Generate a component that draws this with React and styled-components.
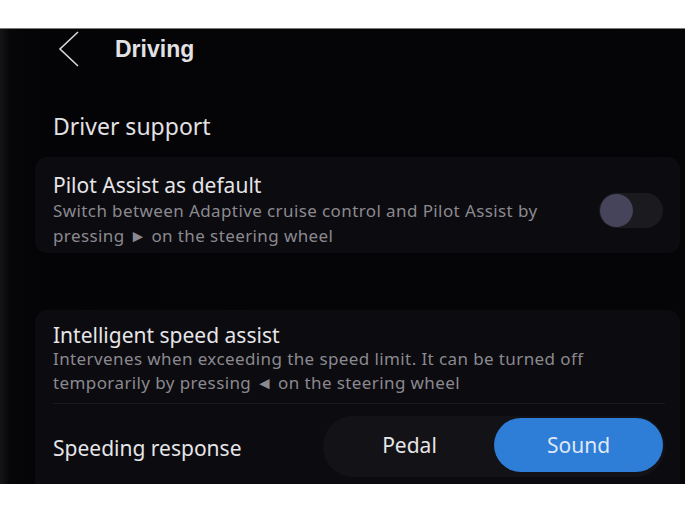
import styled, { createGlobalStyle } from "styled-components";

const GlobalStyle = createGlobalStyle`
    html, body {
        margin: 0;
        padding: 0;
        background: #ffffff;
    }
    body {
        font-family: "Noto Sans", "Open Sans", sans-serif;
    }
`;

const Page = styled.div`
    padding-top: 28px;
    height: 514px;
    box-sizing: border-box;
`;

const Screen = styled.div`
    height: 456px;
    overflow: hidden;
    background: linear-gradient(90deg, #151417 0px, #060507 10px, #040305 40px, #050406 100%);
    border-top: 1px solid #7a7a7a;
    box-sizing: border-box;
    color: #e4e3e6;
`;

const Header = styled.div`
    display: flex;
    align-items: center;
    height: 40px;
    padding-left: 58px;
    gap: 35px;
`;

const Title = styled.h1`
    margin: 0;
    font-family: "Liberation Sans", Arial, sans-serif;
    font-size: 23px;
    font-weight: 700;
    color: #e2e1e4;
`;

const SectionTitle = styled.h2`
    margin: 42px 0 0 53px;
    font-size: 23px;
    font-weight: 400;
    line-height: 30px;
    color: #e2e1e4;
`;

const Card = styled.div`
    margin: ${(p) => p.$top}px 5px 0 35px;
    background: #0c0b0f;
    border-radius: 12px;
    padding: ${(p) => p.$pad};
`;

const Row = styled.div`
    display: flex;
    align-items: center;
    justify-content: space-between;
`;

const TextBlock = styled.div`
    display: flex;
    flex-direction: column;
`;

const ItemTitle = styled.div`
    font-size: 21px;
    line-height: ${(p) => p.$lh || 26}px;
    color: #e6e5e8;
`;

const Desc = styled.div`
    font-size: 17px;
    line-height: ${(p) => p.$lh || 25}px;
    letter-spacing: 0.4px;
    color: #8b8990;
    max-width: 560px;
`;

const Toggle = styled.div`
    width: 66px;
    height: 35px;
    border-radius: 18px;
    background: #1b1a1f;
    display: flex;
    align-items: center;
    margin-right: 17px;
`;

const Knob = styled.div`
    width: 33px;
    height: 33px;
    border-radius: 50%;
    background: #46445a;
    margin-left: 1px;
`;

const Divider = styled.div`
    height: 1px;
    background: #19181c;
    margin: 8px 15px 0 0;
`;

const ResponseRow = styled(Row)`
    padding: 12px 15px 0 0;
`;

const Label = styled.div`
    font-size: 21px;
    color: #e6e5e8;
    padding-top: 3px;
`;

const Segmented = styled.div`
    display: grid;
    grid-template-columns: 1fr 1fr;
    width: 342px;
    height: 61px;
    padding: 2px 2px 5px 2px;
    box-sizing: border-box;
    border-radius: 30px;
    background: #131216;
`;

const Segment = styled.div`
    display: flex;
    align-items: center;
    justify-content: center;
    border-radius: 28px;
    font-size: 21px;
    color: ${(p) => (p.$active ? "#dfe8f5" : "#e6e5e8")};
    background: ${(p) => (p.$active ? "#2e7dd7" : "transparent")};
`;

export default function App() {
    return (
        <Page>
            <GlobalStyle />
            <Screen>
                <Header>
                    <svg width="22" height="36" viewBox="0 0 22 36">
                        <path
                            d="M20 1 L2 18 L20 35"
                            fill="none"
                            stroke="#d8d7da"
                            strokeWidth="1.6"
                        />
                    </svg>
                    <Title>Driving</Title>
                </Header>
                <SectionTitle>Driver support</SectionTitle>
                <Card $top={16} $pad="15px 0 5px 18px">
                    <Row>
                        <TextBlock>
                            <ItemTitle>Pilot Assist as default</ItemTitle>
                            <Desc>
                                Switch between Adaptive cruise control and Pilot Assist by pressing ► on the steering wheel
                            </Desc>
                        </TextBlock>
                        <Toggle>
                            <Knob />
                        </Toggle>
                    </Row>
                </Card>
                <Card $top={57} $pad="13px 0 20px 18px">
                    <TextBlock>
                        <ItemTitle $lh={24}>Intelligent speed assist</ItemTitle>
                        <Desc $lh={24}>
                            Intervenes when exceeding the speed limit. It can be turned off temporarily by pressing ◄ on the steering wheel
                        </Desc>
                    </TextBlock>
                    <Divider />
                    <ResponseRow>
                        <Label>Speeding response</Label>
                        <Segmented>
                            <Segment>Pedal</Segment>
                            <Segment $active>Sound</Segment>
                        </Segmented>
                    </ResponseRow>
                </Card>
            </Screen>
        </Page>
    );
}
